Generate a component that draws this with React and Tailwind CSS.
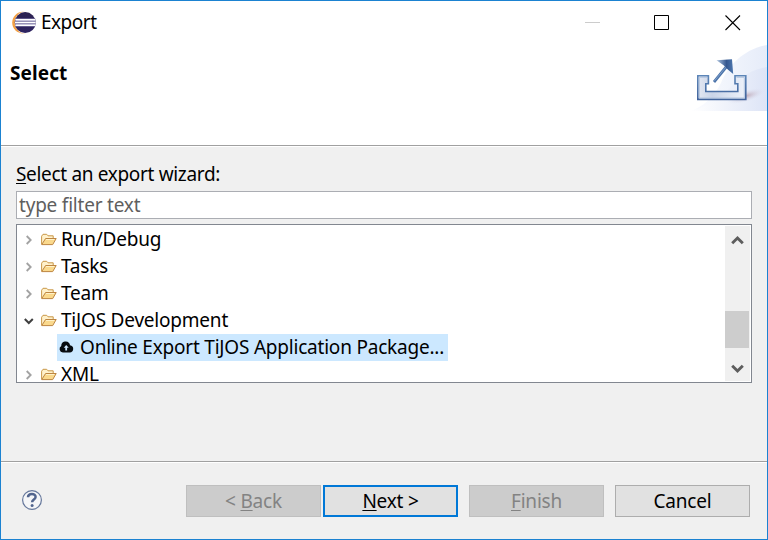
import React from "react";

function EclipseLogo() {
  return (
    <svg width="26" height="24" viewBox="0 0 26 24" className="block shrink-0">
      <defs>
        <linearGradient id="orb" x1="0" y1="0" x2="0" y2="1">
          <stop offset="0" stopColor="#2c2250" />
          <stop offset="1" stopColor="#2e2462" />
        </linearGradient>
      </defs>
      <circle cx="12" cy="11.6" r="10.8" fill="#f4a145" />
      <circle cx="14.8" cy="11.6" r="11" fill="#fff" />
      <circle cx="14.2" cy="11.6" r="10.5" fill="url(#orb)" />
      <path d="M4.4 8.8H24.2M4 11.5H24.6M4.4 14.2H24.2" stroke="#8f89b8" strokeWidth="2.4" />
      <path d="M4.4 8.8H24.2M4 11.5H24.6M4.4 14.2H24.2" stroke="#fff" strokeWidth="1.6" />
    </svg>
  );
}

function ExportBanner() {
  return (
    <svg width="75" height="67" viewBox="692 44 75 67" className="block shrink-0">
      <defs>
        <linearGradient id="haze" x1="0" x2="1">
          <stop offset="0" stopColor="#fff" />
          <stop offset="1" stopColor="#dde4f6" />
        </linearGradient>
        <linearGradient id="haze2" x1="0" x2="1">
          <stop offset="0" stopColor="#fbfcff" />
          <stop offset="1" stopColor="#e6ecf9" />
        </linearGradient>
        <linearGradient id="tray" x1="0" x2="1">
          <stop offset="0" stopColor="#e4e8f2" />
          <stop offset=".3" stopColor="#cad4e8" />
          <stop offset="1" stopColor="#eef2fa" />
        </linearGradient>
        <linearGradient id="edge" x1="0" y1="0" x2="0" y2="1">
          <stop offset="0" stopColor="#5d86b8" />
          <stop offset="1" stopColor="#41639c" />
        </linearGradient>
        <linearGradient id="tip" x1="0" x2="1">
          <stop offset="0" stopColor="#b3c8e2" />
          <stop offset=".6" stopColor="#34578f" />
          <stop offset="1" stopColor="#4d77af" />
        </linearGradient>
        <radialGradient id="shade">
          <stop offset="0" stopColor="#c0abb9" />
          <stop offset="1" stopColor="#dde4f6" stopOpacity="0" />
        </radialGradient>
      </defs>
      <path d="M767 45C745 49 729 64 721 83C713 99 702 106 692 111H767Z" fill="url(#haze2)" />
      <path d="M767 67C748 70 735 82 724 94C713 103 703 107 692 111H767Z" fill="url(#haze)" />
      <ellipse cx="746" cy="96" rx="20" ry="6" fill="url(#shade)" transform="rotate(-16 746 96)" />
      <path d="M697.8 75.8H708.4V83.8H705.8V91.5H737.8V83.8H735V75.8H745.8V99.4H697.8Z" fill="url(#tray)" stroke="url(#edge)" strokeWidth="1.6" />
      <path d="M699.3 98V77.3H707M736.5 77.3H744.3V98H699.3" fill="none" stroke="#b3c5df" strokeWidth="1" />
      <path d="M714 82L727 66" stroke="#4b73aa" strokeWidth="2.8" />
      <path d="M714.5 80.8L726 67" stroke="#8cabd0" strokeWidth=".8" />
      <path d="M716.5 60.2L732 59.2L733.2 74L727.8 69.4L723.6 65.2Z" fill="url(#tip)" />
    </svg>
  );
}

function Folder() {
  return (
    <svg width="16" height="13" viewBox="0 0 16 13" className="mb-px ml-[7px] block shrink-0">
      <path d="M.6 11.2V3.2L2 1.3H5.7L7 2.8H12.2V6" fill="#fff1cb" stroke="#c99849" />
      <path d="M.7 11.6L4.6 5.5H15.2L11.7 11.6Z" fill="#fad98d" stroke="#bd8541" strokeLinejoin="round" />
      <path d="M5 6.5H13.3" stroke="#fff2c9" />
    </svg>
  );
}

function Cloud() {
  return (
    <svg width="15" height="12" viewBox="0 0 15 12" className="mb-px block shrink-0">
      <path d="M3.8 11.5A3.5 3.5 0 0 1 2.3 5C2.2 1.8 4.6.4 6.8.5C9.4.6 10.8 2.2 11 4.3C13.2 4.6 14.3 6.1 14.2 8C14.1 10 12.7 11.5 10.9 11.5Z" fill="#070b10" />
      <path d="M7.2 4L4.7 6.8H6.3V9.5H8.1V6.8H9.7Z" fill="#cfe8ff" />
    </svg>
  );
}

function Chevron({ open }) {
  return (
    <svg width="10" height="10" viewBox="0 0 10 10" className="block shrink-0">
      {open ? (
        <path d="M.8 3L4.8 7L8.8 3" fill="none" stroke="#3f3f3f" strokeWidth="2" />
      ) : (
        <path d="M2.7 1L6.7 5L2.7 9" fill="none" stroke="#a2a2a2" strokeWidth="1.8" />
      )}
    </svg>
  );
}

function Row({ label, open }) {
  return (
    <div className="flex h-[27px] shrink-0 items-center pl-[6px]">
      <Chevron open={open} />
      <Folder />
      <span className="ml-1 pb-px leading-5 whitespace-nowrap">{label}</span>
    </div>
  );
}

function ScrollArrow({ down }) {
  return (
    <svg width="13" height="10" viewBox="0 0 13 10" className="block">
      <path d={down ? "M1.2 1.7L6.5 7L11.8 1.7" : "M1.2 8.3L6.5 3L11.8 8.3"} fill="none" stroke="#5d5d5d" strokeWidth="2.9" />
    </svg>
  );
}

function Key({ children }) {
  return <span className="underline decoration-1 underline-offset-[2px] [text-decoration-skip-ink:none]">{children}</span>;
}

function Button({ children, className }) {
  return (
    <button className={`flex h-8 w-[135px] shrink-0 items-center justify-center whitespace-pre ${className}`}>
      {children}
    </button>
  );
}

export default function App() {
  return (
    <div className="flex h-[540px] w-[768px] flex-col overflow-hidden border border-[#1b82d1] bg-[#f0f0f0] font-['Noto_Sans','Open_Sans',sans-serif] text-[19px] leading-[27px] tracking-[-0.21px] text-black">
      <header className="flex h-[144px] shrink-0 flex-col bg-white">
        <div className="flex h-[43px] shrink-0 items-center pl-[10px]">
          <EclipseLogo />
          <span className="ml-1 tracking-[-0.5px]">Export</span>
          <svg width="156" height="17" viewBox="0 0 156 17" className="mr-[26px] ml-auto block" fill="none">
            <path d="M0 8.5H15" stroke="#ccc" />
            <path d="M69.5 1.5H83.5V15.5H69.5Z" stroke="#000" />
            <path d="M140.5 1.5L155 16M155 1.5L140.5 16" stroke="#000" strokeWidth="1.1" />
          </svg>
        </div>
        <div className="flex justify-between">
          <h1 className="mt-[16px] pl-[9px] text-[19px] font-bold tracking-[0.1px]">Select</h1>
          <ExportBanner />
        </div>
      </header>
      <div className="h-[2px] shrink-0 border-t border-b border-t-[#a0a0a0] border-b-white" />

      <main className="flex h-[314px] shrink-0 flex-col px-[15px]">
        <label className="mt-[14px] h-[27px] shrink-0 tracking-[-0.33px]">
          <Key>S</Key>elect an export wizard:
        </label>
        <div className="mt-[3px] flex h-7 w-[736px] shrink-0 items-center border border-[#abadb3] bg-white pl-[2px] text-[#5f5f5f]">
          type filter text
        </div>
        <div className="mt-[5px] flex h-[159px] w-[736px] shrink-0 border border-[#828790] bg-white p-px">
          <div className="flex h-[155px] flex-1 flex-col overflow-hidden">
            <Row label="Run/Debug" />
            <Row label="Tasks" />
            <Row label="Team" />
            <Row label="TiJOS Development" open />
            <div className="ml-[39px] flex h-[27px] w-[391px] shrink-0 items-center bg-[#cce8ff] pl-[2px]">
              <Cloud />
              <span className="ml-[6px] pb-px leading-5 whitespace-nowrap">Online Export TiJOS Application Package...</span>
            </div>
            <Row label="XML" />
          </div>
          <div className="flex w-[25px] flex-col items-start bg-[#f0f0f0]">
            <div className="flex h-[85px] w-6 justify-center pt-[9px]">
              <ScrollArrow />
            </div>
            <div className="h-[37px] w-6 bg-[#cdcdcd]" />
            <div className="flex h-[33px] w-6 justify-center pt-[16px]">
              <ScrollArrow down />
            </div>
          </div>
        </div>
      </main>

      <div className="h-[2px] shrink-0 border-t border-b border-t-[#a0a0a0] border-b-white" />
      <footer className="flex h-[76px] shrink-0 items-start pt-[22px] pl-5">
        <svg width="22" height="22" viewBox="0 0 22 22" className="mt-[4px] block shrink-0">
          <circle cx="11" cy="11" r="9.4" fill="#f5f6f8" stroke="#65779b" strokeWidth="1.2" />
          <path d="M7 8.3C7.1 3.9 14.8 4 14.6 8C14.5 10.6 11.1 10.4 11.1 13.2" fill="none" stroke="#52658e" strokeWidth="2.5" />
          <circle cx="11.1" cy="16.4" r="1.5" fill="#52658e" />
        </svg>
        <Button className="ml-[143px] border border-[#bfbfbf] bg-[#cccccc] text-[#838383]">{"< "}<Key>B</Key>ack</Button>
        <Button className="ml-[2px] border-2 border-[#0078d7] bg-[#e1e1e1]"><Key>N</Key>{"ext >"}</Button>
        <Button className="ml-[11px] border border-[#bfbfbf] bg-[#cccccc] text-[#838383]"><Key>F</Key>inish</Button>
        <Button className="ml-[11px] border border-[#adadad] bg-[#e1e1e1]">Cancel</Button>
      </footer>
    </div>
  );
}
